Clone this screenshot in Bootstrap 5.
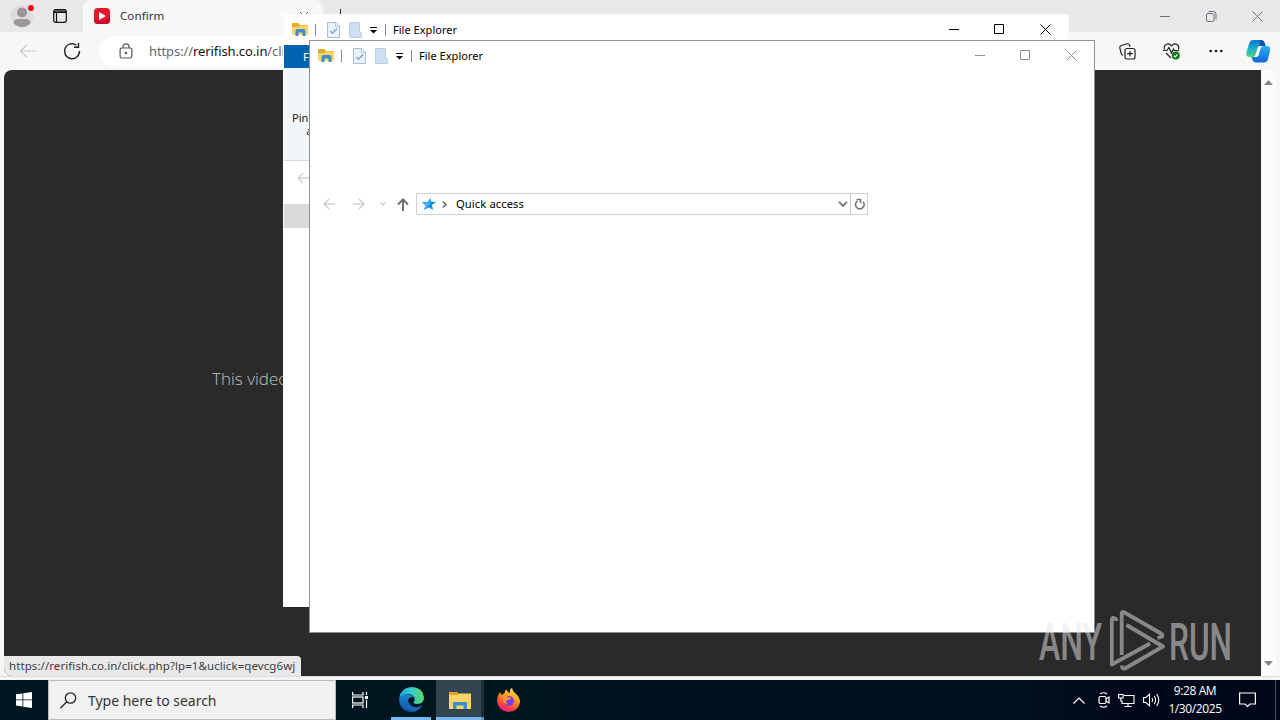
<!DOCTYPE html>
<html lang="en">
<head>
  <meta charset="UTF-8">
  <title>Desktop</title>
  <meta name="viewport" content="width=device-width, initial-scale=1">
  <link href="https://cdn.jsdelivr.net/npm/bootstrap@5.3.0/dist/css/bootstrap.min.css" rel="stylesheet">
  <style>
    body { width: 1280px; height: 720px; overflow: hidden; font-family: "Noto Sans", "Open Sans", sans-serif; font-size: 11.3px; color: #1b1b1b; line-height: 16px; }
    svg { display: block; flex: none; overflow: visible; }
    .desk { width: 1280px; height: 720px; }

    /* browser */
    .browser { height: 680px; background: #f7f7f7; }
    .tabstrip { height: 32px; background: #e8e8e8; }
    .profile { padding: 3px 0 0 10px; }
    .tab-actions { padding: 9px 0 0 17px; }
    .page-tab { width: 240px; height: 32px; margin-left: 16px; padding: 0 14px 0 11px; background: #f7f7f7; border-radius: 8px 8px 0 0; }
    .page-tab span { margin-left: 10px; letter-spacing: .1px; color: #333; font-size: 11.5px; }
    .new-tab { padding: 9px 0 0 10px; }
    .win-btns { padding-right: 17px; gap: 35px; }
    .toolbar { height: 38px; padding-left: 19px; padding-right: 9px; }
    .address { width: 900px; height: 31px; margin-left: 18px; padding-left: 21px; border-radius: 16px; background: #fff; color: #666; font-size: 13px; letter-spacing: -.1px; }
    .address b { font-weight: 400; color: #111; }
    .heart { margin-left: 27px; }
    .dots { margin-left: 28px; }
    .copilot { margin-left: 23px; }
    .viewport { height: 606px; margin-left: 4px; width: 1272px; background: #fcfcfc; border-radius: 8px; }
    .video-page { width: 1257px; background: #2a2a2a; border-radius: 8px 0 0 8px; }
    .video-msg { padding: 298px 0 0 208px; font-size: 17px; line-height: 22px; font-family: "Open Sans", sans-serif; font-weight: 300; color: #c0c0c0; }
    .scroller { width: 15px; padding: 10px 0 10px; }
    .status-url { width: 297px; height: 20px; background: #e9e9e9; border-radius: 0 4px 0 8px; padding-left: 5px; font-size: 11.5px; letter-spacing: .08px; line-height: 19px; color: #3c3c3c; white-space: nowrap; }
    .browser-foot { height: 4px; background: #f3f4fa; border-top: 1px solid #ddd; }

    /* explorer windows */
    .explorer { background: #fff; color: #000; overflow: hidden; }
    .explorer-back { left: 283px; top: 14px; width: 786px; height: 593px; border: 1px solid #fafafa; }
    .explorer-front { left: 309px; top: 40px; width: 786px; height: 593px; border: 1px solid #8f8f8f; }
    .titlebar { height: 29px; padding-left: 8px; padding-right: 17px; font-size: 11px; letter-spacing: .03px; white-space: nowrap; }
    .v-rule { width: 1px; height: 12px; background: #888; }
    .rule-first { margin-left: 6px; }
    .qa-props { margin-left: 11px; }
    .qa-new { margin-left: 9px; }
    .qa-menu { margin: 2px 8px 0; color: #000; }
    .qa-title { margin-left: 7px; padding-top: 1px; }
    .captions { color: #000; gap: 34px; }
    .captions svg:last-child { margin-left: 1px; }
    .explorer-front .captions { color: #8d8d8d; }
    .file-tab { width: 56px; height: 23px; margin-top: 1px; background: #0063b1; color: #fff; padding-left: 19px; line-height: 24px; font-size: 11px; }
    .ribbon { height: 93px; background: #f3f6f9; border-bottom: 1px solid #d6d8da; padding: 43px 0 0 6px; font-size: 11px; line-height: 13px; color: #222; }
    .ribbon-label { width: 66px; text-align: center; white-space: nowrap; }
    .back-nav { height: 43px; padding: 11px 0 0 13px; color: #cfcfcf; }
    .side-item { width: 140px; height: 24px; background: #d9d9d9; }
    .nav-row { margin-top: 123px; height: 22px; padding-left: 13px; color: #cfcfcf; }
    .nav-fwd { margin-left: 18px; }
    .nav-drop { margin-left: 15px; }
    .nav-up { margin-left: 11px; }
    .path-box { width: 452px; height: 22px; margin-left: 7px; border: 1px solid #d0d0d0; color: #000; font-size: 11.2px; letter-spacing: .1px; }
    .path-star { margin-left: 5px; }
    .path-chev { margin-left: 6px; }
    .path-text { margin-left: 9px; }
    .path-down { margin-right: 2px; }
    .reload { width: 17px; height: 20px; border-left: 1px solid #d0d0d0; }

    /* taskbar */
    .taskbar { height: 40px; color: #fff; background: linear-gradient(90deg, #001722 0%, #00171f 40%, #00101e 50%, #000f1d 80%, #00091b 88%, #000819 100%); }
    .start { width: 48px; }
    .search-box { width: 288px; height: 40px; background: #f1f1f1; border: 1px solid #b9bdbf; padding-left: 11px; color: #333; font-size: 14px; letter-spacing: -.02px; }
    .search-text { margin-left: 11px; padding-top: 2px; }
    .task { width: 49px; height: 40px; }
    .task-on { border-bottom: 3px solid #76b9ed; }
    .task-edge { width: 40px; margin: 0 5px 0 6px; }
    .task-files { width: 45px; background: #33454e; padding: 3px 0 0 3px; }
    .task-stack { width: 3px; background: #1d303a; border-bottom: 3px solid #5c93c0; }
    .tray { gap: 7px; }
    .tray-rec { margin-left: 5px; }
    .tray-vol { margin-left: 1px; }
    .clock { width: 60px; margin: 0 7px 0 -2px; font-size: 12px; line-height: 18px; text-align: center; letter-spacing: -.4px; font-family: "Open Sans", sans-serif; white-space: nowrap; }
    .show-desk { width: 5px; border-left: 1px solid #4c5662; margin-left: 19px; }
    .brand-mark { left: 1036px; top: 606px; }
  </style>
</head>
<body>

<svg width="0" height="0" class="position-absolute" aria-hidden="true">
  <defs>
    <symbol id="folder" viewBox="0 0 17 15">
      <path d="M0 2Q0 1 1 1H6L8 3H15Q16 3 16 4V12H0Z" fill="#e8a91c"/>
      <path d="M0 5L6 5L8 3.500H16V12Q16 13 15 13H1Q0 13 0 12Z" fill="#ffd567"/>
      <path d="M3.500 14V9.500Q3.500 7 5 7H12Q13.500 7 13.500 9.500V14H10.500V10.500H6.500V14Z" fill="#3a8dd0"/>
    </symbol>
    <symbol id="props" viewBox="0 0 13 16">
      <path d="M.5.5H9L12.500 4V15.500H.5Z" fill="#eaf2fc" stroke="#a9bcda"/>
      <path d="M8.500.5V4.500H12.500" fill="none" stroke="#b7c8e2"/>
      <path d="M3.500 9L5.500 11.200L10 6.500" fill="none" stroke="#7f9fcc" stroke-width="1.300"/>
    </symbol>
    <symbol id="newfolder" viewBox="0 0 13 16">
      <path d="M.5.5H10.500V10L12.500 11V15.500H.5Z" fill="#cfdff4" stroke="#bccde6"/>
    </symbol>
    <symbol id="menu" viewBox="0 0 7 7"><path d="M0 .5H7" stroke="currentColor"/><path d="M0 3H7L3.500 6.500Z" fill="currentColor"/></symbol>
    <symbol id="min" viewBox="0 0 11 11"><path d="M0 5.500H10" stroke="currentColor"/></symbol>
    <symbol id="max" viewBox="0 0 11 11"><path d="M.5.5H9.500V9.500H.5Z" fill="none" stroke="currentColor"/></symbol>
    <symbol id="close" viewBox="0 0 11 11"><path d="M.5.5L10.500 10.500M10.500.5L.5 10.500" stroke="currentColor"/></symbol>
    <symbol id="larrow" viewBox="0 0 12 12"><path d="M12 6H1M6 1L1 6L6 11" fill="none" stroke="currentColor" stroke-width="1.500"/></symbol>
  </defs>
</svg>

<div class="desk position-relative d-flex flex-column">

  <div class="browser d-flex flex-column">
    <div class="tabstrip d-flex align-items-start">
      <div class="profile">
        <svg width="26" height="26" viewBox="0 0 26 26"><circle cx="12" cy="13" r="11.500" fill="#dedede"/><circle cx="12" cy="9.500" r="5" fill="#9b9796"/><path d="M3.500 20Q4 16 8 16H16Q20 16 20.500 20Q17 24 12 24T3.500 20Z" fill="#9b9796"/><circle cx="21" cy="5" r="3" fill="#e30b16"/></svg>
      </div>
      <div class="tab-actions">
        <svg width="14" height="14" viewBox="0 0 14 14" fill="none" stroke="#111" stroke-width="1.200"><rect x=".7" y=".7" width="12.600" height="12.600" rx="2"/><path d="M1 2H13M1 3.300H13M3.500 3V13"/></svg>
      </div>
      <div class="page-tab d-flex align-items-center">
        <svg width="16" height="16" viewBox="0 0 16 16"><rect width="16" height="16" rx="4" fill="#e6172d"/><path d="M0 10Q8 18 16 8V12Q16 16 12 16H4Q0 16 0 12Z" fill="#c9082a"/><path d="M5 4L12 8L5 12Z" fill="#fff"/></svg>
        <span>Confirm</span>
        <svg class="ms-auto" width="10" height="10" viewBox="0 0 10 10" stroke="#555"><path d="M1 1L9 9M9 1L1 9"/></svg>
      </div>
      <div class="new-tab"><svg width="14" height="14" viewBox="0 0 14 14" stroke="#222"><path d="M7.500 0V13M1 6.500H14"/></svg></div>
      <div class="win-btns d-flex align-items-center ms-auto h-100 text-secondary">
        <svg width="11" height="11"><use href="#min"/></svg>
        <svg width="11" height="11" viewBox="0 0 11 11" fill="none" stroke="currentColor"><rect x=".5" y="2.500" width="7.500" height="8" rx="1.500"/><path d="M2.500.5H7.500Q10 .5 10 3V8.500"/></svg>
        <svg width="11" height="11"><use href="#close"/></svg>
      </div>
    </div>
    <div class="toolbar d-flex align-items-center">
      <svg width="18" height="14" viewBox="0 0 18 14" fill="none" stroke="#c9c9c9" stroke-width="1.200"><path d="M17 7H1.500M8 .7L1.500 7L8 13.300"/></svg>
      <svg class="ms-4" width="20" height="18" viewBox="0 0 20 18" fill="none" stroke="#222" stroke-width="1.400"><path d="M18.500 9A7.500 7.500 0 1 1 15.500 3.200M17.500 1V5.200H13"/></svg>
      <div class="address d-flex align-items-center">
        <svg width="13" height="16" viewBox="0 0 13 16" fill="none" stroke="#555" stroke-width="1.200"><rect x=".1" y="5" width="11.800" height="10" rx="1.800"/><path d="M3 5V3.800A3 3 0 0 1 9 3.800V5"/><circle cx="6" cy="10" r=".7" fill="#555"/></svg>
        <span class="ms-3">https://<b>rerifish.co.in</b>/click.php</span>
      </div>
      <div class="d-flex align-items-center ms-auto">
        <svg width="17" height="17" viewBox="0 0 17 17" fill="none" stroke="#222" stroke-width="1.200"><rect x="6" y="5.500" width="10" height="10.500" rx="2"/><path d="M11 8V13.500M8.200 10.700H13.800M4 12.500Q2.500 12 2.200 10.500L.8 5Q.5 3 2.300 2.500L8 .8Q10 .5 10.600 2.500L11 4"/></svg>
        <svg class="heart" width="18" height="17" viewBox="0 0 18 17" fill="none" stroke="#222" stroke-width="1.200"><path d="M1.500 6.500Q.5 3 3 1.500Q6-.3 8.500 3Q11-.3 14 1.500Q16.500 3 15.500 6.500M0 7.500H4L6 4.500L8.500 10L10.500 6L11.500 7.500H16M3 10L8 15"/><circle cx="12.800" cy="12.500" r="4" fill="#107c10" stroke="none"/><path d="M11 12.800L12.300 14L14.500 11.300" stroke="#fff"/></svg>
        <svg class="dots" width="14" height="4" viewBox="0 0 14 4" fill="#111"><circle cx="1.700" cy="2" r="1.300"/><circle cx="7" cy="2" r="1.300"/><circle cx="12.300" cy="2" r="1.300"/></svg>
        <svg class="copilot" width="25" height="23" viewBox="0 0 25 23">
          <defs>
            <linearGradient id="cpa" x1="0" y1="0" x2="0" y2="1"><stop offset="0" stop-color="#0c78c8"/><stop offset=".45" stop-color="#19a9d0"/><stop offset="1" stop-color="#52d683"/></linearGradient>
            <linearGradient id="cpb" x1="0" y1="0" x2="0" y2="1"><stop offset="0" stop-color="#2ab2ed"/><stop offset="1" stop-color="#1267da"/></linearGradient>
          </defs>
          <path d="M7 0H15Q18 0 18.500 3L19.500 6H16Q13.500 6 12.500 9L11 14Q10 17 7 17H4Q-1 17 .5 12L3 4Q4 0 7 0Z" fill="url(#cpa)"/>
          <path d="M18 22.500H10Q7.500 22.500 6.500 20L5.500 17H9Q11.500 17 12.500 14L14 9Q15 6 18 6H21Q25 6 24 11L22 19Q21 22.500 18 22.500Z" fill="url(#cpb)"/>
          <path d="M14 0Q18 0 19 4L19.500 6H16.500Q13.500 6 13 7Z" fill="#1453b4"/>
          <path d="M13 6H16.500Q14.500 7 13.700 11L12.700 15Q12 17 8 17Q9.500 16 10 13L11.300 9Q11.800 7 13 6Z" fill="#fff"/>
        </svg>
      </div>
    </div>
    <div class="viewport d-flex">
      <div class="video-page d-flex flex-column justify-content-between">
        <div class="video-msg">This video</div>
        <div class="status-url">https://rerifish.co.in/click.php?lp=1&amp;uclick=qevcg6wj</div>
      </div>
      <div class="scroller d-flex flex-column align-items-center justify-content-between">
        <svg width="9" height="5"><path d="M0 5L4.500 0L9 5Z" fill="#858585"/></svg>
        <svg width="9" height="5"><path d="M0 0L4.500 5L9 0Z" fill="#858585"/></svg>
      </div>
    </div>
    <div class="browser-foot"></div>
  </div>

  <div class="taskbar d-flex align-items-center">
    <div class="start d-flex justify-content-center">
      <svg width="16" height="16" viewBox="0 0 16 16" fill="#fff"><path d="M0 2.300L6.500 1.400V7.500H0ZM7.300 1.300L16 0V7.500H7.300ZM0 8.300H6.500V14.500L0 13.600ZM7.300 8.300H16V16L7.300 14.700Z"/></svg>
    </div>
    <div class="search-box d-flex align-items-center">
      <svg width="17" height="17" viewBox="0 0 17 17" fill="none" stroke="#222" stroke-width="1.300"><circle cx="10.500" cy="6" r="5.200"/><path d="M6.700 9.800L.5 16.200"/></svg>
      <span class="search-text">Type here to search</span>
    </div>
    <div class="task d-flex align-items-center justify-content-center">
      <svg width="17" height="16" viewBox="0 0 17 16" fill="none" stroke="#fff" stroke-width="1.200"><path d="M.6 0V3H11V0M.6 16V13H11V16M14.500 0V3M14.500 8V16"/><rect x=".6" y="5" width="10.400" height="6"/><path d="M13 5.500H16" stroke-width="3"/></svg>
    </div>
    <div class="task task-on task-edge d-flex align-items-center justify-content-center">
      <svg width="25" height="25" viewBox="0 -1 24 24">
        <defs>
          <linearGradient id="edgetop" x1="0" x2="1"><stop offset="0" stop-color="#2aa5df"/><stop offset=".5" stop-color="#36c8c9"/><stop offset="1" stop-color="#62db67"/></linearGradient>
          <linearGradient id="edgelow" x1="0" y1="0" x2="0" y2="1"><stop offset="0" stop-color="#1c86d6"/><stop offset="1" stop-color="#124f9e"/></linearGradient>
        </defs>
        <path d="M.2 11Q1 1 12 0Q23 .5 24 10Q24 16 17.500 16.200Q13.500 16 14 14.500Q16 12.500 14.500 9.500Q11 5 5 7.500Q1.500 9 .2 11Z" fill="url(#edgetop)"/>
        <path d="M0 12Q2 7 7.500 7Q12 7 14 10Q9 9 8.500 14Q9 20 16 20Q20 20 22.500 17.500Q18.500 24 12 24Q1 23.500 0 12Z" fill="url(#edgelow)"/>
        <path d="M8.500 12Q5.500 21 14.500 23.600Q19.500 22 22.500 17.500Q18 20 14 19Q9 17 8.500 12Z" fill="#1669b8"/>
      </svg>
    </div>
    <div class="task task-on task-files d-flex align-items-center justify-content-center">
      <svg width="22" height="19" viewBox="0 0 22 19"><path d="M0 1H8L10 3H21V17H0Z" fill="#e9a127"/><path d="M0 4H8L10 2.500H22V18H0Z" fill="#fbd567"/><path d="M4 18V12Q4 11 5 11H17Q18 11 18 12V18H14.500V14.500H7.500V18Z" fill="#3c8fcf"/></svg>
    </div>
    <div class="task-stack h-100"></div>
    <div class="task d-flex align-items-center justify-content-center">
      <svg width="23" height="24" viewBox="0 0 23 24">
        <defs><linearGradient id="fox" x1=".8" y1="0" x2=".3" y2="1"><stop offset="0" stop-color="#fff044"/><stop offset=".4" stop-color="#ff9a22"/><stop offset=".75" stop-color="#ff4443"/><stop offset="1" stop-color="#e51b78"/></linearGradient></defs>
        <path d="M3 4L4.500 7L7.500 5Q8 2 9.500 1.500Q10 4 13 5Q12 1 15 0Q15.500 3 18 5Q23 9 23 14Q22 23 11.500 24Q1 23 0 13Q0 8 3 4Z" fill="url(#fox)"/>
        <circle cx="12" cy="13" r="5" fill="#7941e8"/>
        <path d="M5 8Q8 6.500 11 9Q14 9 14 10.500Q12 12 9.500 12Q8.500 14 10.500 15.500Q7 16.500 6 13Z" fill="#ff9428"/>
      </svg>
    </div>
    <div class="tray d-flex align-items-center ms-auto">
      <svg width="12" height="7" viewBox="0 0 12 7" fill="none" stroke="#fff" stroke-width="1.200"><path d="M.5 6.500L6 1L11.500 6.500"/></svg>
      <svg class="tray-rec" width="14" height="16" viewBox="0 0 14 16" fill="none" stroke="#fff" stroke-width="1.200"><rect x="2" y="4.500" width="7" height="7" rx="1.500"/><path d="M9 7L12 5V11L9 9M3 2Q6.500-.5 10 2M3 14Q6.500 16.500 10 14"/></svg>
      <svg width="17" height="15" viewBox="0 0 17 15" fill="none" stroke="#fff" stroke-width="1.100"><path d="M6 2.500H16V10.500H4V8M10 10.500V13.500M6.500 13.500H13.500"/><rect x=".6" y="1.500" width="4.500" height="3.500"/><path d="M2.800 5V8H4.500"/></svg>
      <svg class="tray-vol" width="17" height="14" viewBox="0 0 17 14" fill="none" stroke="#fff" stroke-width="1.100"><path d="M.6 4.500H3L6.500 1.200V12.800L3 9.500H.6ZM9 5Q10.500 7 9 9M11.200 3Q14 7 11.200 11M13.600 1Q18 7 13.600 13"/></svg>
      <div class="clock">9:28 AM<br>1/30/2025</div>
      <svg width="17" height="16" viewBox="0 0 17 16" fill="none" stroke="#fff" stroke-width="1.200"><path d="M.6 1H16.400V12H11L8.500 14.500L6 12H.6Z"/></svg>
    </div>
    <div class="show-desk h-100"></div>
  </div>

  <div class="explorer explorer-back position-absolute">
    <div class="titlebar d-flex align-items-center">
      <svg width="17" height="15"><use href="#folder"/></svg>
      <div class="v-rule rule-first"></div>
      <svg class="qa-props" width="13" height="16"><use href="#props"/></svg>
      <svg class="qa-new" width="13" height="16"><use href="#newfolder"/></svg>
      <svg class="qa-menu" width="7" height="7"><use href="#menu"/></svg>
      <div class="v-rule"></div>
      <span class="qa-title">File Explorer</span>
      <div class="captions d-flex ms-auto">
        <svg width="11" height="11"><use href="#min"/></svg>
        <svg width="11" height="11"><use href="#max"/></svg>
        <svg width="11" height="11"><use href="#close"/></svg>
      </div>
    </div>
    <div class="file-tab">File</div>
    <div class="ribbon"><div class="ribbon-label">Pin to Quick<br>access</div></div>
    <div class="back-nav"><svg width="12" height="12"><use href="#larrow"/></svg></div>
    <div class="side-item"></div>
  </div>

  <div class="explorer explorer-front position-absolute">
    <div class="titlebar d-flex align-items-center">
      <svg width="17" height="15"><use href="#folder"/></svg>
      <div class="v-rule rule-first"></div>
      <svg class="qa-props" width="13" height="16"><use href="#props"/></svg>
      <svg class="qa-new" width="13" height="16"><use href="#newfolder"/></svg>
      <svg class="qa-menu" width="7" height="7"><use href="#menu"/></svg>
      <div class="v-rule"></div>
      <span class="qa-title">File Explorer</span>
      <div class="captions d-flex ms-auto">
        <svg width="11" height="11"><use href="#min"/></svg>
        <svg width="11" height="11"><use href="#max"/></svg>
        <svg width="11" height="11"><use href="#close"/></svg>
      </div>
    </div>
    <div class="nav-row d-flex align-items-center">
      <svg width="12" height="12"><use href="#larrow"/></svg>
      <svg class="nav-fwd" width="12" height="12" viewBox="0 0 12 12" fill="none" stroke="currentColor" stroke-width="1.500"><path d="M0 6H11M6 1L11 6L6 11"/></svg>
      <svg class="nav-drop" width="6" height="4" viewBox="0 0 6 4" fill="none" stroke="currentColor" stroke-width="1.300"><path d="M.5.5L3 3L5.500.5"/></svg>
      <svg class="nav-up" width="12" height="13" viewBox="0 0 12 13" fill="none" stroke="#707070" stroke-width="2"><path d="M6 13V1.500M1 6.500L6 1.500L11 6.500"/></svg>
      <div class="path-box d-flex align-items-center">
        <svg class="path-star" width="14" height="13" viewBox="0 0 14 13"><path d="M8.500 0L9 3.500L14 4L10 7L11 12L7 9.500L1.500 12L4 8L0 4L5.500 4Z" fill="#1590dd"/><path d="M8.500 0L7.500 7L1.500 12L4 8L1 4.500L5.500 4.500Z" fill="#55bdf3" opacity=".7"/></svg>
        <svg class="path-chev" width="5" height="7" viewBox="0 0 5 7" fill="none" stroke="#666" stroke-width="1.500"><path d="M.8.5L4 3.500L.8 6.500"/></svg>
        <span class="path-text">Quick access</span>
        <svg class="path-down ms-auto" width="10" height="6" viewBox="0 0 10 6" fill="none" stroke="#777" stroke-width="1.900"><path d="M1 .8L5 4.800L9 .8"/></svg>
        <div class="reload d-flex align-items-center justify-content-center">
          <svg width="11" height="12" viewBox="0 0 11 12" fill="none" stroke="#777" stroke-width="1.600"><path d="M9 3.700A4.300 4.300 0 1 1 3.500 3M2.500 1.500H6.500V5.500"/></svg>
        </div>
      </div>
    </div>
  </div>

  <svg class="brand-mark position-absolute" width="200" height="70" viewBox="0 0 200 70">
    <g opacity=".5" fill="#e6e6e6" font-family="Roboto, sans-serif" font-size="52" font-weight="500">
      <text x="3" y="53.500" textLength="63" lengthAdjust="spacingAndGlyphs">ANY</text>
      <text x="133" y="53.500" textLength="63" lengthAdjust="spacingAndGlyphs">RUN</text>
      <g fill="none" stroke="#e6e6e6" stroke-width="3.800" stroke-linejoin="round">
        <path d="M85.700 49V8Q85.700 5 88.500 6.500L125 27.500Q128 30 125 31L121.500 32"/>
        <path d="M80 15V13Q76 10 75.800 14.500V58.500L114 37.500"/>
        <path d="M90.500 19L127 40.500L89 62.500Q86 63.500 86 59.500"/>
      </g>
    </g>
  </svg>
</div>

<script src="https://cdn.jsdelivr.net/npm/bootstrap@5.3.0/dist/js/bootstrap.bundle.min.js"></script>
</body>
</html>
